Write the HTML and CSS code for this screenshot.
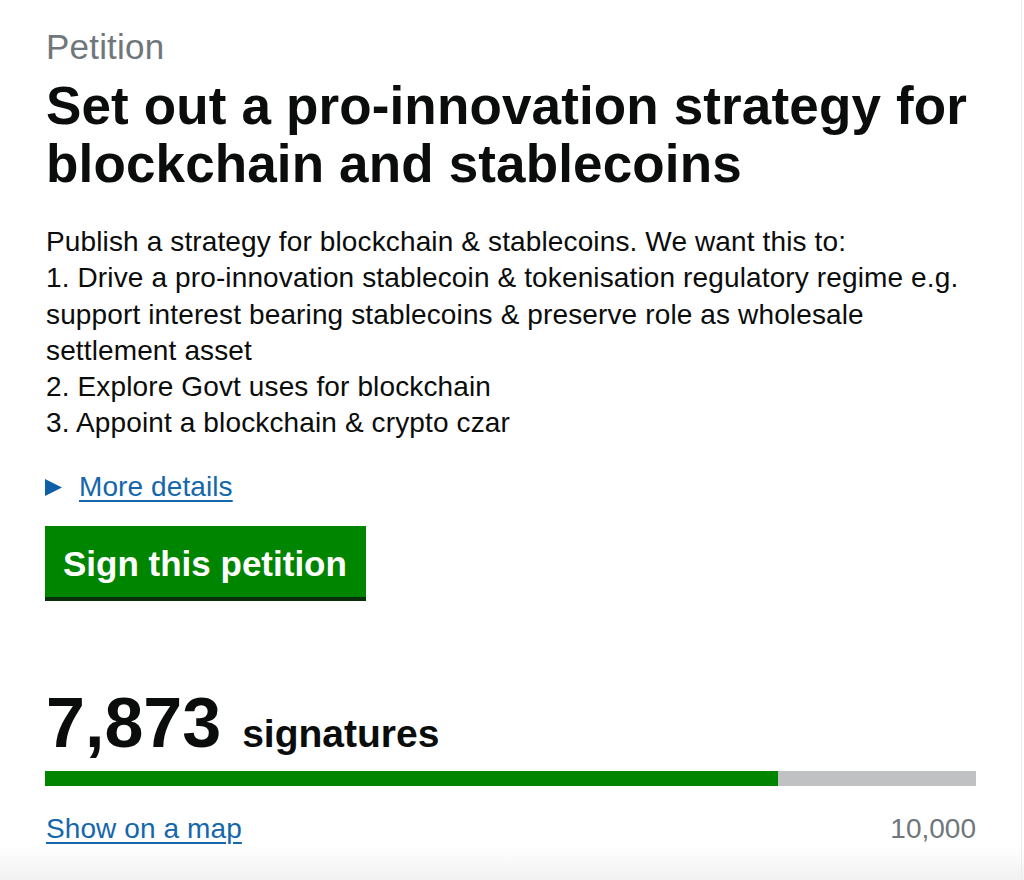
FILE: index.html
```html
<!DOCTYPE html>
<html lang="en">
<head>
<meta charset="utf-8">
<title>Petition</title>
<link rel="stylesheet" href="styles.css">
</head>
<body>
<main class="page">
  <p class="caption">Petition</p>
  <h1 class="title">Set out a pro-innovation strategy for blockchain and stablecoins</h1>
  <p class="summary">Publish a strategy for blockchain &amp; stablecoins. We want this to:<br>1. Drive a pro-innovation stablecoin &amp; tokenisation regulatory regime e.g. support interest bearing stablecoins &amp; preserve role as wholesale settlement asset<br>2. Explore Govt uses for blockchain<br>3. Appoint a blockchain &amp; crypto czar</p>
  <div class="details">
    <svg class="details-arrow" width="17" height="17" viewBox="0 0 17 17" aria-hidden="true"><polygon points="0,0 17,8.5 0,17" fill="#0f5fa6"/></svg>
    <a class="link" href="#">More details</a>
  </div>
  <a class="button" href="#">Sign this petition</a>
  <div class="count">
    <span class="count-number">7,873</span>
    <span class="count-label">signatures</span>
  </div>
  <div class="progress"><div class="progress-fill" style="width: 78.73%"></div></div>
  <div class="progress-meta">
    <a class="link" href="#">Show on a map</a>
    <span class="target">10,000</span>
  </div>
</main>
</body>
</html>
```

FILE: styles.css
```css
html, body {
  margin: 0;
  padding: 0;
}
body {
  min-height: 880px;
  font-family: "Liberation Sans", Arial, Helvetica, sans-serif;
  color: #0b0c0c;
  background: linear-gradient(to bottom, #ffffff 846px, #f1f1f1 880px);
}
.page {
  box-sizing: border-box;
  width: 1022px;
  min-height: 880px;
  padding: 27px 45px 0 46px;
  border-right: 1px solid #ececec;
}
.caption {
  margin: 0;
  font-size: 35px;
  line-height: 40px;
  color: #6f777b;
  letter-spacing: 0.2px;
}
.title {
  margin: 10px 0 0;
  font-size: 53px;
  line-height: 58px;
  font-weight: bold;
  letter-spacing: 0.14px;
}
.summary {
  margin: 31px 0 0;
  font-size: 28px;
  line-height: 36.3px;
  letter-spacing: 0.13px;
}
.details {
  display: flex;
  align-items: center;
  gap: 17px;
  margin-top: 27px;
  height: 36px;
}
.details-arrow {
  display: block;
  margin-left: -1px;
  margin-top: 1px;
}
.link {
  font-size: 28px;
  line-height: 36px;
  color: #1567ab;
  text-decoration: underline;
  text-decoration-thickness: 1.5px;
  text-underline-offset: 4px;
  letter-spacing: 0.1px;
}
.button {
  display: inline-block;
  margin-top: 21px;
  margin-left: -1px;
  padding: 18px 19px 13px 18px;
  font-size: 35px;
  line-height: 40px;
  font-weight: bold;
  color: #ffffff;
  background: #008500;
  text-decoration: none;
  box-shadow: 0 4px 0 #0b2f0b;
}
.count {
  display: flex;
  align-items: baseline;
  gap: 21px;
  margin-top: 86px;
  height: 80px;
}
.count-number {
  font-size: 70px;
  line-height: 80px;
  font-weight: bold;
}
.count-label {
  font-size: 39px;
  line-height: 44px;
  font-weight: bold;
}
.progress {
  margin-top: 8px;
  margin-left: -1px;
  height: 15px;
  background: #bfc1c3;
}
.progress-fill {
  height: 100%;
  background: #008500;
}
.progress-meta {
  display: flex;
  justify-content: space-between;
  align-items: baseline;
  margin-top: 25px;
}
.target {
  font-size: 28px;
  line-height: 36px;
  color: #6f777b;
}
```
